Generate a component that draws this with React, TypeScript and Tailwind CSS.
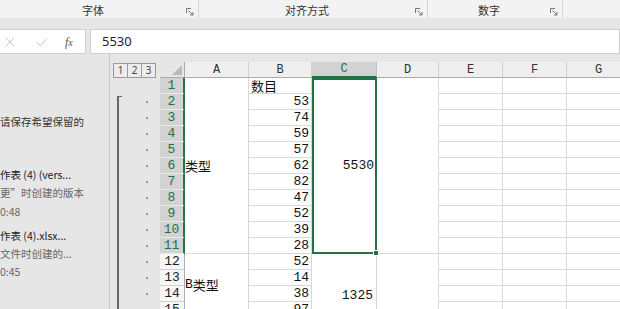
import { FC, ReactNode } from 'react';

const ROW = [
  'row-start-1', 'row-start-2', 'row-start-3', 'row-start-4', 'row-start-5', 'row-start-6',
  'row-start-7', 'row-start-8', 'row-start-9', 'row-start-10', 'row-start-11', 'row-start-12',
  'row-start-13', 'row-start-14', 'row-start-15', 'row-start-16', 'row-start-17',
];
const COL = [
  'col-start-1', 'col-start-2', 'col-start-3', 'col-start-4', 'col-start-5',
  'col-start-6', 'col-start-7', 'col-start-8', 'col-start-9',
];

const values = [null, 53, 74, 59, 57, 62, 82, 47, 52, 39, 28, 52, 14, 38, 97];
const cols = ['A', 'B', 'C', 'D', 'E', 'F', 'G'];

const mono = "font-['Liberation_Mono','DejaVu_Sans_Mono',monospace]";
const cjk = "font-['Noto_Sans_CJK_SC','Noto_Sans',sans-serif]";

const Launcher = () => (
  <svg width="8" height="8" viewBox="0 0 8 8" className="text-[#777]">
    <path d="M0.5 5V0.5H5" fill="none" stroke="currentColor" strokeWidth="1" />
    <path d="M2.5 2.5L7 7M7 4V7H4" fill="none" stroke="currentColor" strokeWidth="1" />
  </svg>
);

const Group: FC<{ label: string; w: string }> = ({ label, w }) => (
  <div className={`${w} h-full flex items-center border-r border-[#d6d6d6] pr-[4px]`}>
    <span className="flex-1 text-center text-[11px] text-[#333] pt-[2px]">{label}</span>
    <div className="mt-[6px]"><Launcher /></div>
  </div>
);

const Cell: FC<{ r: number; c: number; cls?: string; children?: ReactNode }> = ({ r, c, cls = '', children }) => (
  <div className={`${ROW[r]} ${COL[c]} ${cls}`}>{children}</div>
);

const LeftLine: FC<{ text: string; cls?: string }> = ({ text, cls = '' }) => (
  <div className={`h-[18px] leading-[18px] whitespace-nowrap text-[10.5px] ${cls}`}>{text}</div>
);

export default function App() {
  const rows = Array.from({ length: 15 }, (_, i) => i + 1);
  return (
    <div className={`w-[620px] h-[309px] overflow-hidden bg-[#e6e6e6] ${cjk} flex flex-col`}>
      {/* ribbon group labels */}
      <div className="h-[18px] bg-[#f3f3f3] flex shrink-0">
        <Group label="字体" w="w-[199px]" />
        <Group label="对齐方式" w="w-[229px]" />
        <Group label="数字" w="w-[135px]" />
        <div className="flex-1" />
      </div>
      <div className="h-[11px] shrink-0" />
      {/* formula bar */}
      <div className="h-[25px] flex gap-[4px] shrink-0">
        <div className="w-[86px] bg-white border-y border-r border-[#cfcfcf] flex items-center">
          <svg width="10" height="10" viewBox="0 0 10 10" className="ml-[5px]">
            <path d="M1 1L9 9M9 1L1 9" stroke="#c2c2c2" strokeWidth="1" />
          </svg>
          <svg width="12" height="10" viewBox="0 0 12 10" className="ml-[21px]">
            <path d="M1 5L4.5 8.5L11 1.5" fill="none" stroke="#c2c2c2" strokeWidth="1" />
          </svg>
          <span className="ml-[17px] italic text-[12px] text-[#555] font-['Liberation_Serif',serif]">f<span className="text-[10px]">x</span></span>
        </div>
        <div className="flex-1 bg-white border border-[#cfcfcf] flex items-center pl-[11px] text-[13px] text-[#222] font-['Noto_Sans',sans-serif]">
          5530
        </div>
      </div>
      <div className="flex flex-1 min-h-0">
        {/* recovery pane */}
        <div className="w-[110px] shrink-0 border-r border-[#c8c8c8] overflow-hidden flex flex-col">
          <LeftLine text="请保存希望保留的" cls="mt-[59px] text-[#333]" />
          <LeftLine text="作表 (4) (vers..." cls="mt-[35px] text-[#222]" />
          <LeftLine text="更”时创建的版本" cls="text-[#666]" />
          <LeftLine text="0:48" cls="mt-[1px] text-[#666]" />
          <LeftLine text="作表 (4).xlsx..." cls="mt-[6px] text-[#222]" />
          <LeftLine text="文件时创建的..." cls="text-[#666]" />
          <LeftLine text="0:45" cls="text-[#666]" />
        </div>
        {/* sheet */}
        <div className="flex-1 min-w-0 overflow-hidden pt-[8px]">
          <div className="grid grid-cols-[50px_25px_64px_63px_65px_62px_64px_64px_64px] grid-rows-[16px_repeat(16,16px)] w-[521px]">
            {/* outline level buttons */}
            <Cell r={0} c={0} cls="flex items-center pl-[3px]">
              {['1', '2', '3'].map((n) => (
                <div key={n} className="w-[15px] h-[15px] border border-[#9a9a9a] bg-[#ececec] text-[10px] leading-[13px] text-center text-[#444] font-['Noto_Sans',sans-serif] -ml-px first:ml-0">
                  {n}
                </div>
              ))}
            </Cell>
            {/* corner */}
            <Cell r={0} c={1} cls="bg-[#e6e6e6] border-b border-r border-[#ababab] flex items-end justify-end p-[2px]">
              <svg width="10" height="10" viewBox="0 0 10 10">
                <path d="M10 0V10H0Z" fill="#b9b9b9" />
              </svg>
            </Cell>
            {cols.map((l, i) => (
              <Cell
                key={l}
                r={0}
                c={i + 2}
                cls={`${mono} text-[12px] flex items-center justify-center ${
                  l === 'C'
                    ? 'bg-[#d2d2d2] text-[#217346] border-b-2 border-b-[#217346] border-r border-r-[#c0c0c0]'
                    : 'bg-[#efefef] text-[#333] border-b border-b-[#ababab] border-r border-r-[#d0d0d0]'
                }`}
              >
                {l}
              </Cell>
            ))}

            {/* outline bracket and dots */}
            <div className="row-start-3 row-span-15 col-start-1 flex">
              <div className="ml-[7px] mt-[2px] w-[5px] border-l-2 border-t border-[#666]" />
              <div className="ml-[24px] flex flex-col">
                {rows.slice(1).map((r) => (
                  <div key={r} className="h-[16px] flex items-center">
                    <div className="w-[2px] h-[2px] bg-[#999]" />
                  </div>
                ))}
              </div>
            </div>

            {rows.map((r) => {
              const sel = r <= 11;
              const v = values[r - 1];
              return [
                <Cell
                  key={`h${r}`}
                  r={r}
                  c={1}
                  cls={`${mono} text-[13px] flex items-center justify-center ${
                    sel
                      ? 'bg-[#d2d2d2] text-[#217346] border-b border-b-[#e9e9e9] border-r-2 border-r-[#217346]'
                      : 'bg-[#f7f7f7] text-[#222] border-b border-b-[#d2d2d2] border-r border-r-[#ababab]'
                  }`}
                >
                  {r}
                </Cell>,
                <Cell
                  key={`b${r}`}
                  r={r}
                  c={3}
                  cls={`bg-white border-r border-b border-[#d8d8d8] flex items-center ${
                    v === null ? `${cjk} text-[13px] pl-[2px]` : `${mono} text-[13px] justify-end pr-[2px]`
                  } text-[#111]`}
                >
                  {v === null ? '数目' : v}
                </Cell>,
                ...[6, 7, 8].map((c) => (
                  <Cell key={`e${r}${c}`} r={r} c={c} cls="bg-white border-r border-b border-[#d8d8d8]" />
                )),
              ];
            })}

            {/* merged A */}
            <div className="row-start-2 row-span-11 col-start-3 bg-white border-r border-b border-[#d8d8d8] flex items-center text-[13px] text-[#111]">
              类型
            </div>
            <div className="row-start-13 row-span-5 col-start-3 bg-white border-r border-[#d8d8d8] flex items-start pt-[21px] text-[13px] text-[#111]">
              <span className={mono}>B</span>类型
            </div>
            {/* merged C, selected */}
            <div className="row-start-2 row-span-11 col-start-5 relative bg-white border-2 border-[#217346] flex items-center justify-end pr-[1px]">
              <span className={`${mono} text-[13px] text-[#111]`}>5530</span>
              <div className="absolute -right-[4px] -bottom-[4px] w-[6px] h-[6px] bg-[#217346] border border-white" />
            </div>
            <div className="row-start-13 row-span-5 col-start-5 bg-white border-r border-[#d8d8d8] flex items-start justify-end pt-[32px] pr-[3px]">
              <span className={`${mono} text-[13px] text-[#111]`}>1325</span>
            </div>
            {/* merged D */}
            <div className="row-start-2 row-span-11 col-start-6 bg-white border-r border-b border-[#d8d8d8]" />
            <div className="row-start-13 row-span-5 col-start-6 bg-white border-r border-[#d8d8d8]" />
          </div>
        </div>
      </div>
    </div>
  );
}
